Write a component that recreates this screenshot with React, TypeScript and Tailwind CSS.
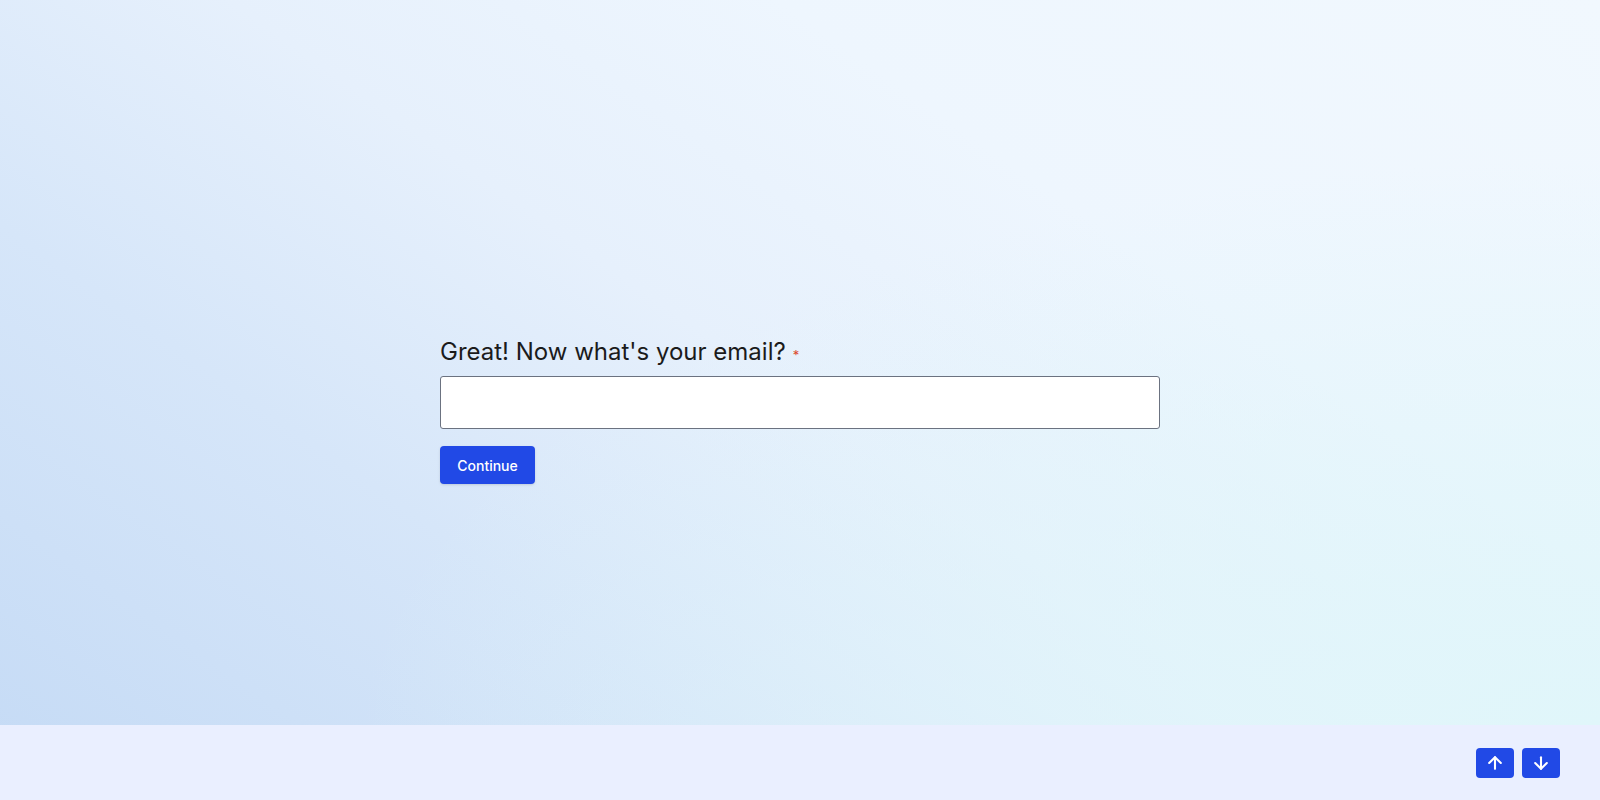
import { ArrowUp, ArrowDown } from "lucide-react";

export default function App() {
  return (
    <div
      className="flex h-[800px] w-full flex-col overflow-hidden bg-[linear-gradient(35deg,#c4daf5_0%,#d6e6f9_30%,#e6f0fc_50%,#eef6fe_70%,#f1f8fe_100%)] text-gray-900"
      style={{ fontFamily: "Inter, 'Noto Sans', sans-serif" }}
    >
      <main className="relative flex-1 bg-[radial-gradient(ellipse_at_100%_100%,#e0f6fa_0%,rgba(224,246,250,0.6)_25%,rgba(224,246,250,0)_55%)]">
        <div className="mx-auto w-[720px] pt-[336px]">
          <h1 className="flex items-baseline text-[24px] leading-8 font-normal text-[#1b1b1b]">
            Great! Now what's your email?
            <span className="ml-[7px] text-[13px] text-[#dc4a2c]">*</span>
          </h1>
          <input
            type="email"
            aria-label="Email"
            className="mt-[5px] block h-[53px] w-full rounded-[3px] border border-[#6b7280] bg-white px-3 text-base outline-none"
          />
          <button
            type="button"
            className="mt-[17px] h-[38px] w-[95px] rounded-[4px] bg-[#2149e6] text-[14px] font-medium text-white shadow-sm"
          >
            Continue
          </button>
        </div>
      </main>
      <footer className="flex h-[75px] items-center justify-end gap-2 bg-[#eaefff] pr-10">
        <button
          type="button"
          aria-label="Previous"
          className="grid h-[30px] w-[38px] place-items-center rounded-[4px] bg-[#2149e6] text-white"
        >
          <ArrowUp className="h-[20px] w-[20px]" strokeWidth={2.5} />
        </button>
        <button
          type="button"
          aria-label="Next"
          className="grid h-[30px] w-[38px] place-items-center rounded-[4px] bg-[#2149e6] text-white"
        >
          <ArrowDown className="h-[20px] w-[20px]" strokeWidth={2.5} />
        </button>
      </footer>
    </div>
  );
}
